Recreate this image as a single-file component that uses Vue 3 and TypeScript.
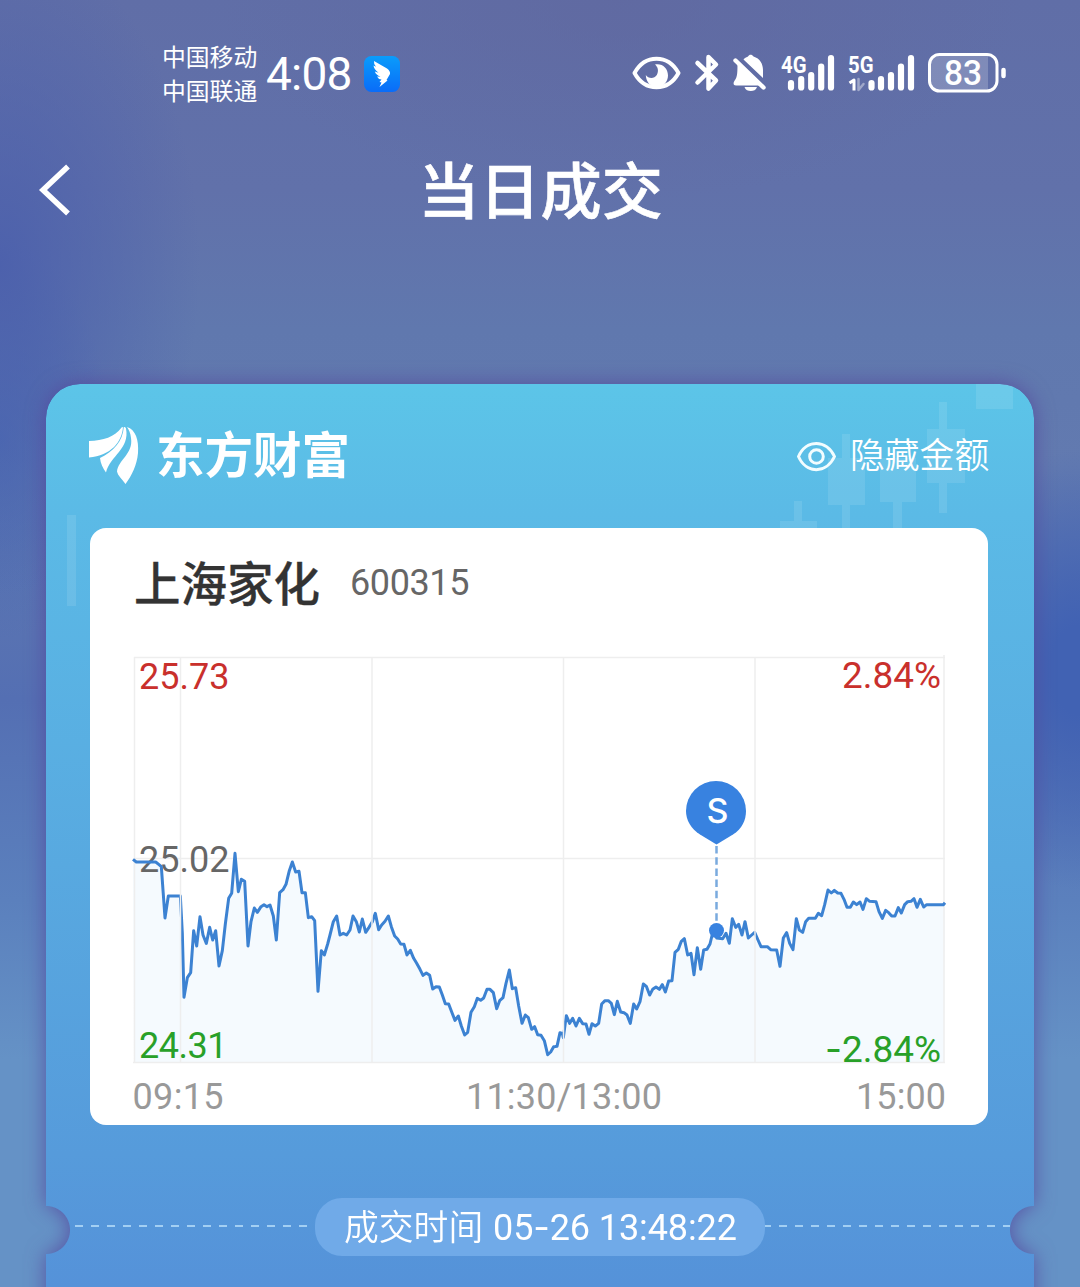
<script setup lang="ts">
interface Segment {
  x: number
  y: number
  points: string
}

// Price samples, three units per pixel, grouped by trading period
const segments: Segment[] = [
  {
    x: 375,
    y: 2490,
    points:
      '24,88 34,96 92,96 102,104 109,110 120,264 130,198 166,198 172,310 177,502 187,443 197,428 206,302 215,348 225,260 234,315 244,340 254,292 263,330 272,302 282,408 292,362 301,282 311,205 320,190 330,70 340,185 349,148 359,154 369,348 378,275 388,234 397,247 408,230 417,224 426,230 435,225 445,258 454,330 464,188 474,179 483,163 493,122 502,96 512,126 522,124 531,188 541,188 550,263 560,260 569,272 579,484 589,362 598,375 608,342',
  },
  {
    x: 990,
    y: 2640,
    points:
      '0,165 10,125 20,108 30,165 40,160 50,165 60,150 69,108 79,125 88,156 97,117 107,157 117,142 127,125 136,100 146,149 155,135 165,124 175,108 184,140 194,168 203,177 212,192 222,193 231,225 241,211 251,235 260,250 270,268 279,286 289,279 299,286 308,327 318,320 328,321 337,345 346,371 356,372 366,398 375,421 385,408 394,438 404,465 413,457 423,397 433,380 442,355 452,361 461,354 471,328 480,328 490,338 500,386 509,362 519,353 528,310 538,270 547,326 557,323 566,378 576,430 586,405 595,413',
  },
  {
    x: 1590,
    y: 2640,
    points:
      '5,448 14,440 23,464 33,466 43,482 53,524 62,516 71,500 81,499 90,458 97,460 100,473 109,407 119,430 128,415 138,438 148,415 158,431 168,432 177,463 186,431 196,438 206,430 215,372 225,362 235,362 244,370 253,404 262,364 272,396 282,398 291,405 301,430 311,372 320,387 330,365 340,312 349,319 359,345 368,328 378,321 388,328 397,314 406,336 416,303 426,302 435,217 445,208 454,184 463,176 473,225 483,220 492,284 502,203 512,268 521,210 531,208 540,192 550,150 560,174 578,176 588,160 598,190',
  },
  {
    x: 1980,
    y: 2310,
    points:
      '217,446 227,472 236,463 246,495 255,455 265,504 275,495 284,487 294,510 303,530 322,530 332,539 350,540 360,589 370,504 380,488 389,520 399,539 409,446 418,480 428,487 437,455 446,445 466,445 475,430 485,437 494,404 504,360 514,369 523,361 533,369 543,370 552,388 561,412 571,412 580,396 590,404 600,396 609,418 619,386 629,394 648,395 657,425 667,445 677,421 686,428 695,438 705,438 715,413 724,429 734,404 743,395 753,394 762,386 771,412 781,388 791,411 800,404 850,404 855,398',
  },
]

const line: string = segments
  .flatMap((s) =>
    s.points.split(' ').map((p) => {
      const [px, py] = p.split(',').map(Number)
      return `${((s.x + px) / 3).toFixed(2)},${((s.y + py) / 3).toFixed(2)}`
    }),
  )
  .join(' ')
const area = `134,1062 ${line} 944,1062`
const gridX: number[] = [180.5, 372, 563.5, 755]
</script>

<template>
  <div class="screen">
    <header class="status">
      <div class="carriers"><span>中国移动</span><span>中国联通</span></div>
      <span class="clock">4:08</span>
      <svg class="app" width="36" height="36" viewBox="0 0 36 36">
        <defs>
          <linearGradient id="appfill" x1="0" y1="0" x2="0" y2="1">
            <stop offset="0" stop-color="#0a9cfb" />
            <stop offset="1" stop-color="#0a6cf8" />
          </linearGradient>
        </defs>
        <rect width="36" height="36" rx="7.5" fill="url(#appfill)" />
        <path d="M10 5L23 12.500Q26.500 15 26 18L22.500 24L23.500 24.500L15.500 31L17.500 26.500L15.500 26L17.500 23.500Q14 23 13 20.500L16.500 20.800Q12 19 10.800 15.500L14.500 16.800Q10 13.500 9.500 9.500L12 10.800Q9.500 8 10 5Z" fill="#fff" />
      </svg>
      <svg class="icons" width="380" height="50" viewBox="630 48 380 50" fill="none" stroke="#fff" stroke-linecap="round" stroke-linejoin="round">
        <path d="M634.500 73C645 54 668 54 678.500 73C668 92 645 92 634.500 73Z" stroke-width="4" />
        <path d="M655 64.500C662 63 668 68 668 75.500C668 82 663 87 656.500 87C650.500 87 646 82 645.800 75C648 78.500 654 79.500 656.800 75C659 71 658 67 655 64.500Z" fill="#fff" stroke="none" />
        <path d="M697.500 63L716 80.500L708.500 88.500V57L716 64.500L697.500 82.500" stroke-width="4.500" />
        <g fill="#fff" stroke="none">
          <path d="M743.500 59.500C745 57.500 747 57 748 56.500C749.500 54 752 54.500 753.500 56.500C760 58.500 763 64 763 70V78Z" />
          <path d="M737.500 61L762 85.500H736C733 85.500 733 82.500 735 80C737.500 77 737.500 72 737.500 61Z" />
          <path d="M744.500 87H757C756 90 753.500 91 750.800 91S745.500 90 744.500 87Z" />
        </g>
        <path d="M735.500 60.500L763.500 87.500" stroke-width="4.400" />
        <g stroke-width="6.200">
          <path d="M791 83V87.500M801.200 79V87.500M811.200 75V87.500M821.200 66.500V87.500M831 58V87.500" />
          <path d="M871.500 83V87.500M881 79V87.500M891 75V87.500M901 66.500V87.500M911 58V87.500" />
        </g>
        <path d="M849.500 83L854 80V90.500" stroke-width="3" stroke-linecap="butt" />
        <path d="M858.500 79V90L863.500 84" stroke-width="2.500" opacity=".4" />
        <g class="signal" fill="#fff" stroke="none">
          <text x="781" y="72.500" textLength="25.500" lengthAdjust="spacingAndGlyphs">4G</text>
          <text x="848" y="72.500" textLength="25.500" lengthAdjust="spacingAndGlyphs">5G</text>
        </g>
        <path d="M939 56H988V90H939Q931 90 931 82V64Q931 56 939 56Z" fill="#fff" fill-opacity=".2" stroke="none" />
        <rect x="929.500" y="54.500" width="67.500" height="36.500" rx="10" stroke-width="3" />
        <path d="M1003.500 70V76" stroke-width="4.500" />
        <text class="battery" x="944" y="85" fill="#fff" stroke="none" textLength="38" lengthAdjust="spacingAndGlyphs">83</text>
      </svg>
    </header>

    <nav class="nav">
      <svg class="back" width="40" height="60" viewBox="35 160 40 60" fill="none" stroke="#fff" stroke-width="5.500">
        <path d="M68 166.500L43 190L68 213.500" />
      </svg>
      <h1>当日成交</h1>
    </nav>

    <div class="shadow">
      <main class="card">
        <svg class="candles" width="988" height="240" viewBox="46 384 988 240" fill="#fff" fill-opacity=".1">
          <path d="M976 384H1013V409H976ZM939 402H947V429H965V483H947V513H939V483H927V429H939ZM842 434H850V458H865V505H850V530H842V505H828V458H842ZM880 458H916V502H902V530H893V502H880ZM794 501H802V521H817V530H780V521H794Z" />
          <rect x="67" y="515" width="9" height="91" />
        </svg>
        <div class="brand">
          <svg class="logo" width="52" height="60" viewBox="88 425 52 60" fill="#fff">
            <path d="M89 441C103 440.500 115 437 121.500 427.500L123 427C122 442 111 455.500 89 457.500Z" />
            <path d="M123.800 427C125 427 125.800 427.500 126 428.500C130 449 110 456 106 472.500C103 468.500 100.500 463.500 100 458C113 452 123 441 123.800 427Z" />
            <path d="M127 427C135.500 429.500 139 440 138 453C137 465 131.500 476 125.500 484C122 479 118 476 117 471.500C118 460 133.500 454 131 438C130.500 433 129 430 127 427Z" />
          </svg>
          <span class="brandname">东方财富</span>
          <svg class="eye" width="42" height="34" viewBox="795 439 42 34" fill="none" stroke="#f2fdff" stroke-width="3">
            <path d="M798.500 456.500C806 439 826.500 439 834.500 456.500C826.500 474 806 474 798.500 456.500Z" stroke-linejoin="round" />
            <circle cx="816.500" cy="456.500" r="6.800" />
          </svg>
          <span class="hide">隐藏金额</span>
        </div>

        <section class="panel">
          <div class="stock"><strong>上海家化</strong><span>600315</span></div>
          <svg class="chart" width="898" height="485" viewBox="90 640 898 485">
            <polygon :points="area" fill="#ecf5fe" fill-opacity=".5" />
            <g stroke="#eee" stroke-width="1.500" fill="none">
              <path d="M134 657.500H945M134 858.500H945M133 1062.500H945M134.500 657V1062M944 655V1062" />
            </g>
            <g class="labels">
              <text x="139" y="871.500" fill="#666" textLength="90.500">25.02</text>
            </g>
            <polyline :points="line" fill="none" stroke="#3c82d2" stroke-width="3" stroke-linejoin="round" />
            <g stroke="#eee" stroke-width="1.500">
              <path v-for="x in gridX" :key="x" :d="`M${x} 657V1062`" />
            </g>
            <path d="M716.500 846V925" stroke="#7aaade" stroke-width="2.500" stroke-dasharray="7.500 3.700" />
            <circle cx="716.500" cy="930.500" r="7.500" fill="#3882e0" />
            <path d="M716.500 844.500L700 834.500C691 829 686 820 686 811A30 30 0 0 1 716 781A30 30 0 0 1 746 811C746 820 742 829 733 834.500Z" fill="#3882e0" />
            <text class="mark" x="717.500" y="822.500" text-anchor="middle">S</text>
            <g class="labels">
              <text x="139" y="689" fill="#c9302c" textLength="90.500">25.73</text>
              <text x="139" y="1058" fill="#28a028" textLength="88.500">24.31</text>
              <text x="842" y="688" fill="#c9302c" textLength="99" lengthAdjust="spacingAndGlyphs">2.84%</text>
              <text x="825" y="1062" fill="#28a028" textLength="116" lengthAdjust="spacingAndGlyphs"><tspan class="minus">-</tspan>2.84%</text>
              <text x="132.500" y="1109" fill="#999" textLength="91">09:15</text>
              <text x="466" y="1109" fill="#999" textLength="196">11:30/13:00</text>
              <text x="856" y="1109" fill="#999" textLength="90">15:00</text>
            </g>
          </svg>
        </section>

        <div class="time">
          <i class="dash left"></i>
          <div class="pill"><span class="cn">成交时间</span><span class="num">05<b class="minus">-</b>26 13:48:22</span></div>
          <i class="dash right"></i>
        </div>
      </main>
    </div>
  </div>
</template>

<style>
body {
  margin: 0;
}
</style>

<style scoped>
.screen {
  width: 1080px;
  height: 1287px;
  overflow: hidden;
  box-sizing: border-box;
  font-family: Roboto, "Noto Sans CJK SC", sans-serif;
  color: #fff;
  background:
    radial-gradient(ellipse 200px 330px at 0 265px, rgba(75, 95, 172, 0.9) 0%, rgba(76, 97, 172, 0) 100%),
    radial-gradient(ellipse 110px 200px at 0 440px, rgba(67, 102, 181, 0.7) 0%, rgba(67, 102, 181, 0) 100%),
    radial-gradient(ellipse 150px 220px at 1080px 670px, #4162b3 20%, rgba(66, 96, 180, 0) 100%),
    radial-gradient(ellipse 400px 200px at 620px 0, rgba(96, 103, 158, 0.6), rgba(96, 103, 158, 0)),
    linear-gradient(180deg, #606ea7 0, #6171aa 190px, #6078ae 330px, #627ab0 470px, #546fb3 700px, #5b80bd 900px, #6592c6 1060px, #6592c6 1287px);
}
.status {
  display: flex;
  height: 144px;
  padding-left: 162px;
}
.carriers {
  display: flex;
  flex-direction: column;
  width: 104px;
  padding-top: 38.5px;
  font: 23.8px/34px "Noto Sans CJK SC", sans-serif;
}
.clock {
  width: 98px;
  padding-top: 49px;
  font-size: 46px;
  line-height: 50px;
  letter-spacing: -0.8px;
}
.app {
  margin-top: 56px;
}
.icons {
  margin: 48px 0 0 230px;
}
.signal {
  font: 700 24px Roboto, sans-serif;
}
.battery {
  font: 500 35px Roboto, sans-serif;
}
.nav {
  display: grid;
  grid-template-columns: 35px 1fr 35px;
  height: 240px;
}
.back {
  grid-area: 1 / 2;
  margin-top: 16px;
}
h1 {
  grid-area: 1 / 1 / 2 / 4;
  margin: 0;
  padding: 4px 0 0 1px;
  text-align: center;
  font: 500 61.2px/80px "Noto Sans CJK SC", sans-serif;
  -webkit-text-stroke: 0.6px #fff;
}
.shadow {
  padding: 0 46px;
  filter: drop-shadow(0 0 10px rgba(84, 68, 155, 0.8));
}
.card {
  display: flex;
  flex-direction: column;
  height: 940px;
  border-radius: 34px 34px 0 0;
  background: linear-gradient(180deg, #5cc5e8 0, #5bbae6 130px, #58a9e0 480px, #569bdb 770px, #5592d9 903px);
  -webkit-mask:
    radial-gradient(circle at 0 846px, transparent 23.5px, #000 24.5px) left / 51% 100% no-repeat,
    radial-gradient(circle at 100% 846px, transparent 23.5px, #000 24.5px) right / 50% 100% no-repeat;
}
.candles {
  height: 240px;
  margin-bottom: -240px;
}
.brand {
  display: flex;
  height: 144px;
  padding-left: 42px;
}
.logo {
  margin-top: 41px;
}
.brandname {
  width: 240px;
  margin: 38px 400px 0 16px;
  font: 700 48.5px/60px "Noto Sans CJK SC", sans-serif;
}
.eye {
  flex: none;
  margin: 55px 0 0 -1px;
}
.hide {
  flex: none;
  margin: 48px 0 0 13px;
  font: 350 34.8px/42px "Noto Sans CJK SC", sans-serif;
}
.panel {
  width: 898px;
  height: 597px;
  margin-left: 44px;
  border-radius: 16px;
  background: #fff;
}
.stock {
  display: flex;
  height: 112px;
  padding-left: 44px;
  color: #333;
}
.stock strong {
  width: 216px;
  margin-top: 23px;
  font: 500 46.500px/60px "Noto Sans CJK SC", sans-serif;
  -webkit-text-stroke: 0.3px #333;
}
.stock span {
  margin-top: 35px;
  font-size: 36px;
  line-height: 40px;
  letter-spacing: -0.4px;
  color: #666;
}
.chart {
  display: block;
}
.labels {
  font: 36px Roboto, sans-serif;
}
.minus {
  font-family: Inter, sans-serif;
  font-weight: inherit;
}
.mark {
  font: 500 34px Inter, sans-serif;
  fill: #fff;
}
.time {
  display: flex;
  margin-top: 73px;
}
.pill {
  display: flex;
  width: 450px;
  height: 58px;
  border-radius: 27px;
  background: #70aae8;
}
.cn {
  width: 149px;
  margin-left: 29px;
  font: 350 34.800px/55px "Noto Sans CJK SC", sans-serif;
}
.num {
  font-size: 36px;
  line-height: 58px;
  letter-spacing: -0.1px;
  white-space: nowrap;
}
.dash {
  height: 2px;
  margin-top: 27px;
  background: repeating-linear-gradient(90deg, #a3cff3 0 8px, transparent 8px 16px);
}
.left {
  width: 240px;
  margin-left: 29px;
}
.right {
  width: 245px;
  background-position-x: -2px;
}
</style>
